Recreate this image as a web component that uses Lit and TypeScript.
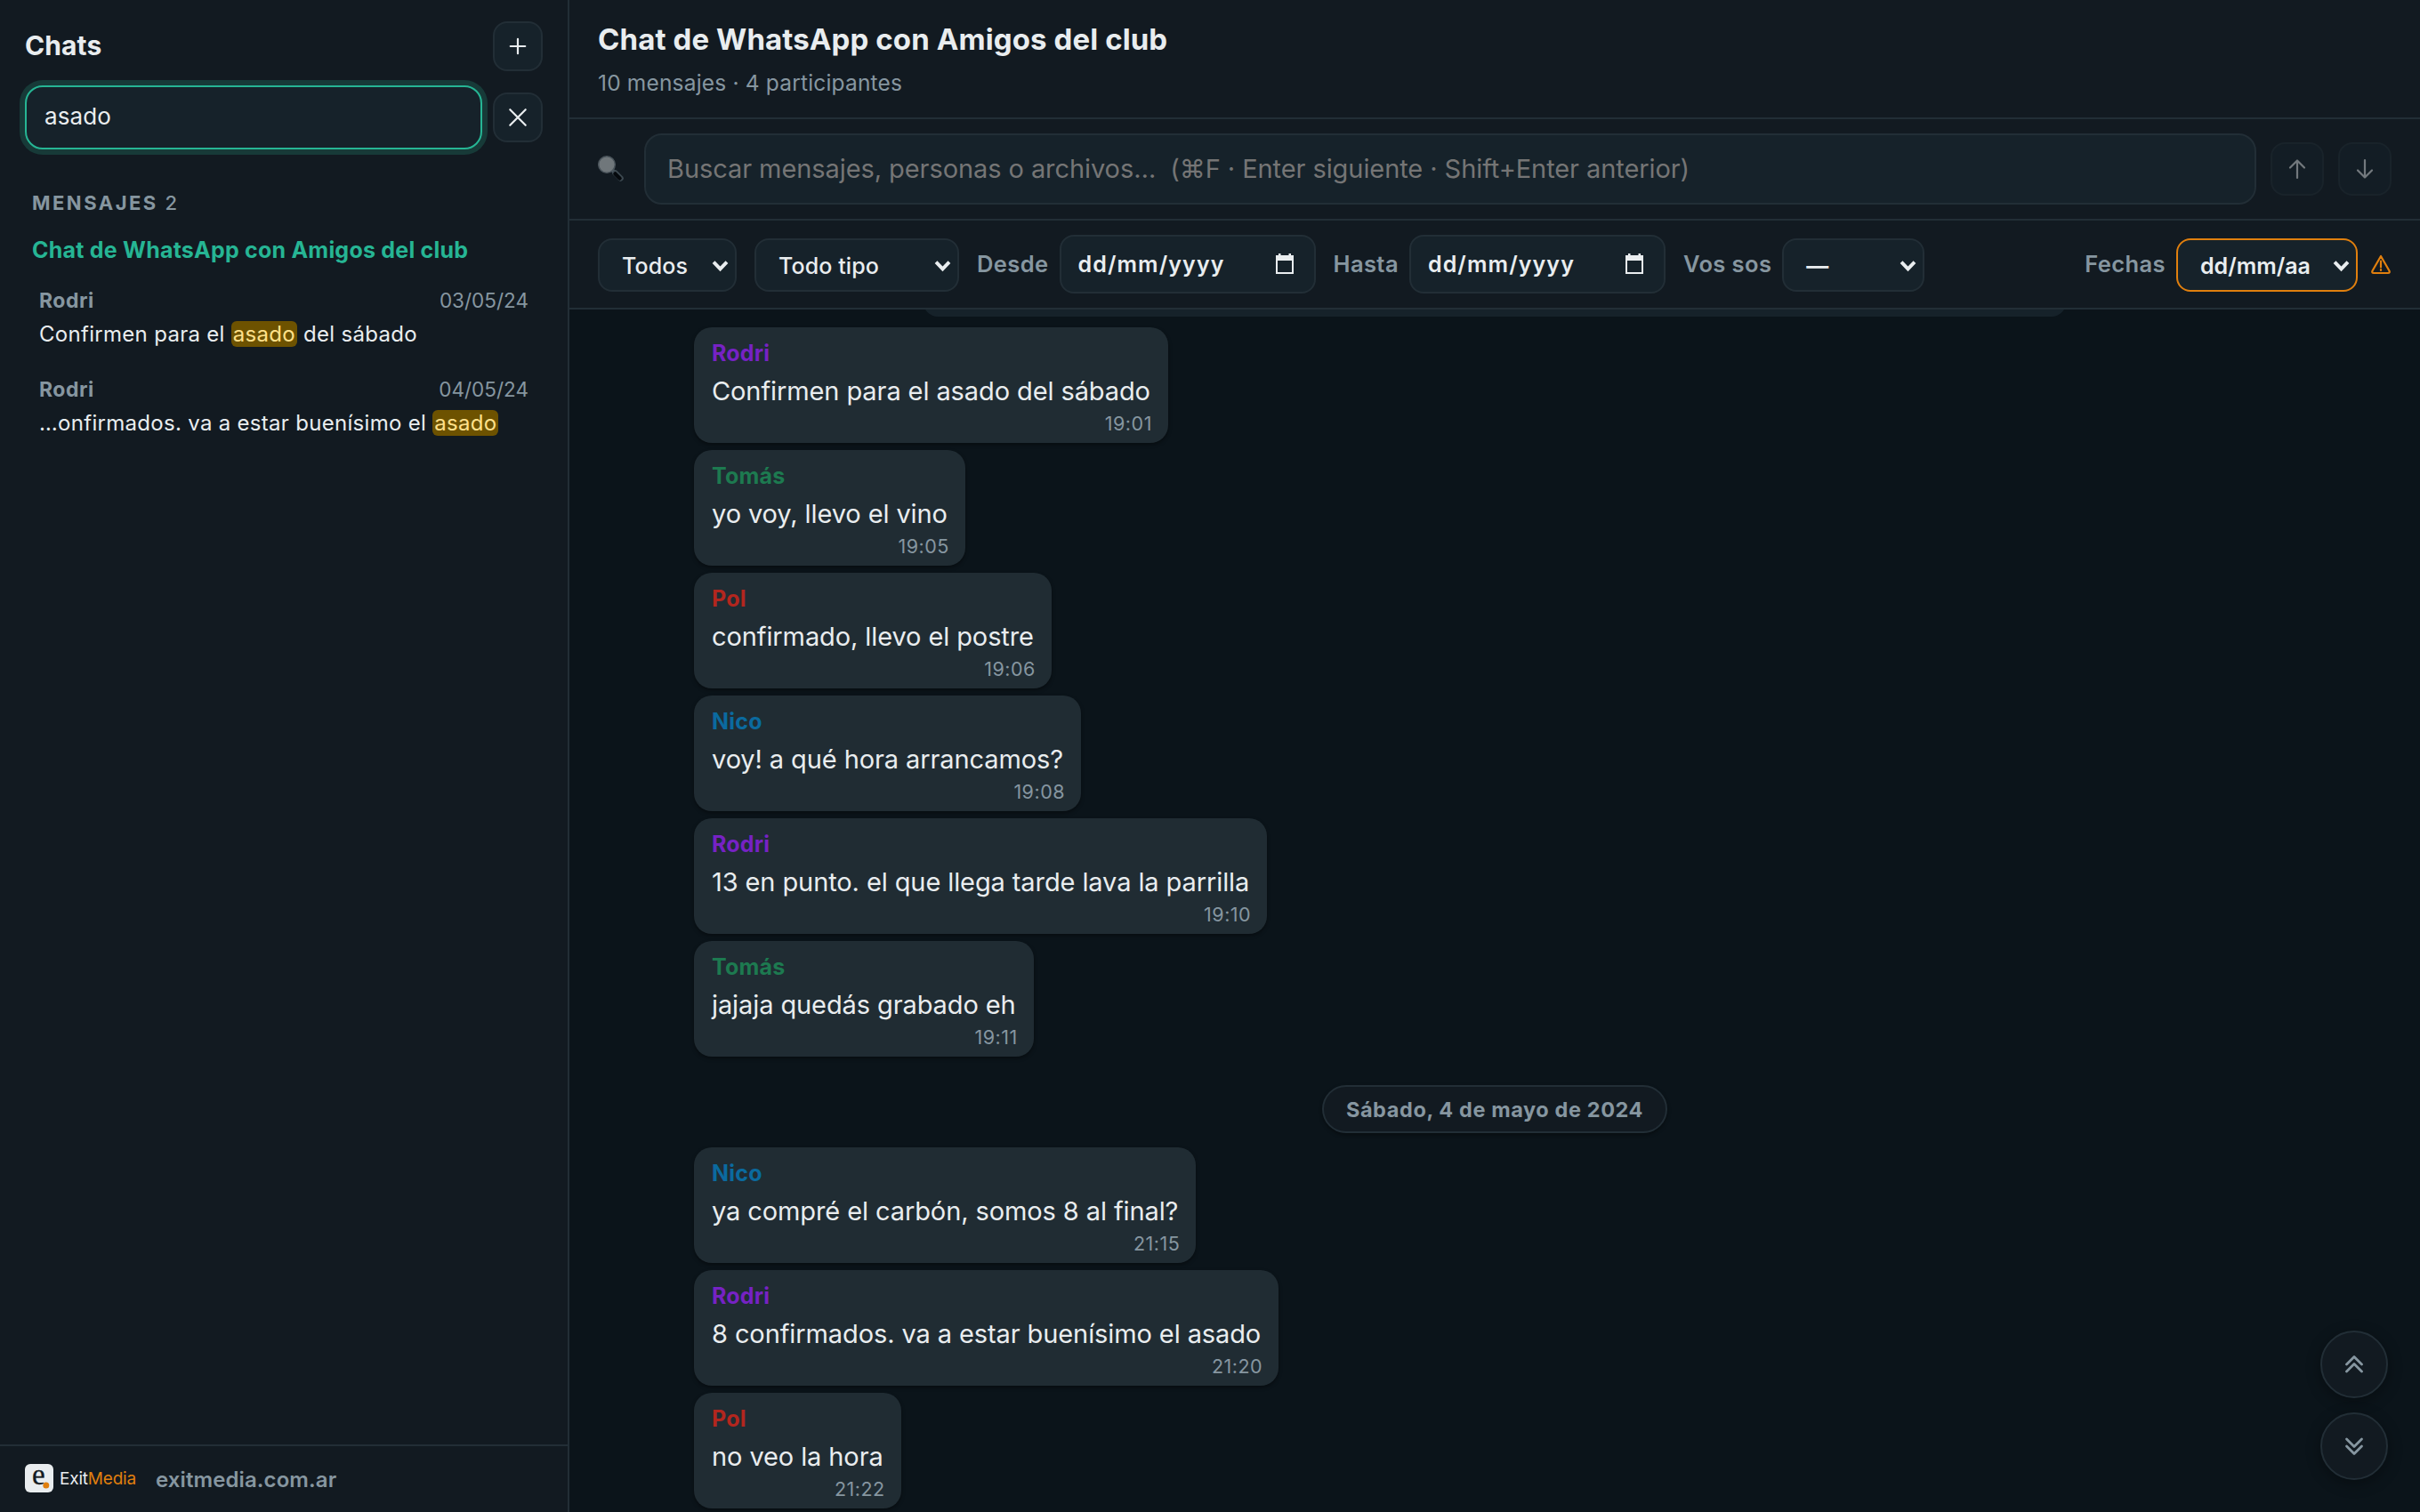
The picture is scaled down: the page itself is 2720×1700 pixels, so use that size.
import { html, css, svg, LitElement } from "lit";
import { customElement, property } from "lit/decorators.js";

interface Message {
  author: string;
  color: string;
  text: string;
  time: string;
}

interface Hit {
  author: string;
  date: string;
  before: string;
  after: string;
}

const HITS: Hit[] = [
  { author: "Rodri", date: "03/05/24", before: "Confirmen para el ", after: " del sábado" },
  { author: "Rodri", date: "04/05/24", before: "…onfirmados. va a estar buenísimo el ", after: "" },
];

const FRIDAY: Message[] = [
  { author: "Rodri", color: "purple", text: "Confirmen para el asado del sábado", time: "19:01" },
  { author: "Tomás", color: "green", text: "yo voy, llevo el vino", time: "19:05" },
  { author: "Pol", color: "red", text: "confirmado, llevo el postre", time: "19:06" },
  { author: "Nico", color: "blue", text: "voy! a qué hora arrancamos?", time: "19:08" },
  { author: "Rodri", color: "purple", text: "13 en punto. el que llega tarde lava la parrilla", time: "19:10" },
  { author: "Tomás", color: "green", text: "jajaja quedás grabado eh", time: "19:11" },
];

const SATURDAY: Message[] = [
  { author: "Nico", color: "blue", text: "ya compré el carbón, somos 8 al final?", time: "21:15" },
  { author: "Rodri", color: "purple", text: "8 confirmados. va a estar buenísimo el asado", time: "21:20" },
  { author: "Pol", color: "red", text: "no veo la hora", time: "21:22" },
];

const ICONS = {
  plus: svg`<path d="M12 3v18M3 12h18" />`,
  close: svg`<path d="M2.5 2.5l19 19M21.5 2.5l-19 19" />`,
  up: svg`<path d="M12 22V2.5M4 10.5l8-8 8 8" />`,
  down: svg`<path d="M12 2v19.5M4 13.5l8 8 8-8" />`,
  top: svg`<path d="M3.5 12L12 3.5l8.5 8.5M3.5 20L12 11.5l8.5 8.5" />`,
  bottom: svg`<path d="M3.5 4l8.5 8.5L20.5 4M3.5 12l8.5 8.5 8.5-8.5" />`,
  chevron: svg`<path d="M3.5 7.5L12 16.5l8.5-9" />`,
  warning: svg`<path d="M12 3L2.5 19.5q-1 2.5 1.5 2.5h16q2.500 0 1.500-2.500zM12 8.500v7M12 18v1" />`,
};

@customElement("ui-icon")
export class UiIcon extends LitElement {
  static styles = css`
    :host {
      display: inline-flex;
      flex: none;
      width: 24px;
      height: 24px;
    }
    svg {
      width: 100%;
      height: 100%;
      fill: none;
      stroke: currentColor;
      stroke-width: var(--stroke, 2.2);
      stroke-linecap: var(--cap, round);
      stroke-linejoin: var(--join, round);
    }
  `;

  @property() name: keyof typeof ICONS = "plus";

  render() {
    return html`<svg viewBox="0 0 24 24">${ICONS[this.name]}</svg>`;
  }
}

@customElement("chat-sidebar")
export class ChatSidebar extends LitElement {
  static styles = css`
    :host {
      box-sizing: border-box;
      display: flex;
      flex-direction: column;
      width: 640px;
      flex: none;
      background: #121a21;
      border-right: 2px solid #222e36;
    }
    .top {
      display: grid;
      grid-template-columns: 1fr 56px;
      column-gap: 12px;
      row-gap: 16px;
      align-items: center;
      padding: 24px 28px 0;
    }
    .title {
      padding-bottom: 2px;
      font-size: 30px;
      font-weight: 700;
      letter-spacing: 0.1px;
      line-height: 54px;
    }
    .square {
      box-sizing: border-box;
      display: flex;
      align-items: center;
      justify-content: center;
      width: 56px;
      height: 56px;
      border: 2px solid #222e36;
      border-radius: 16px;
      background: #16222a;
    }
    .square ui-icon {
      width: 22px;
      height: 22px;
      --stroke: 2.4;
    }
    .search {
      box-sizing: border-box;
      height: 72px;
      padding: 0 20px;
      border: 2px solid #26b594;
      border-radius: 20px;
      background: #16222a;
      box-shadow: 0 0 0 6px #173a38;
      font-size: 26px;
      letter-spacing: 0.1px;
      line-height: 66px;
    }
    .results {
      flex: 1;
      padding: 44px 36px 0;
    }
    .section {
      font-size: 22px;
      font-weight: 700;
      letter-spacing: 2.5px;
      line-height: 32px;
      color: #8696a0;
    }
    .section span {
      font-weight: 500;
    }
    .chat {
      margin-top: 20px;
      font-size: 25px;
      font-weight: 650;
      letter-spacing: 0.22px;
      line-height: 34px;
      color: #26b594;
    }
    .hit {
      height: 100px;
      padding: 0 8px;
    }
    .chat + .hit {
      margin-top: 23px;
    }
    .meta {
      display: flex;
      justify-content: space-between;
      font-size: 22.5px;
      line-height: 34px;
      color: #8696a0;
    }
    .meta b {
      font-size: 23px;
      font-weight: 650;
      letter-spacing: 0.5px;
    }
    .snippet {
      margin-top: 3px;
      font-size: 24px;
      letter-spacing: 0.3px;
      line-height: 36px;
      white-space: pre;
    }
    mark {
      padding: 0 2px;
      border-radius: 6px;
      background: #6d5200;
      color: #ffe08a;
    }
    .footer {
      display: flex;
      align-items: center;
      height: 76px;
      box-sizing: border-box;
      padding: 0 28px;
      border-top: 2px solid #222e36;
    }
    .logo {
      width: 32px;
      height: 32px;
      margin-top: -2px;
      overflow: visible;
    }
    .brand {
      margin-left: 7px;
      padding-bottom: 2px;
      font-size: 19px;
      letter-spacing: -0.2px;
    }
    .brand span {
      color: #e07f0e;
    }
    .site {
      margin-left: 22px;
      font-size: 24px;
      font-weight: 600;
      letter-spacing: 0.1px;
      color: #8696a0;
    }
    .letter {
      font-family: "Liberation Serif", serif;
      font-size: 33px;
      stroke: #121a21;
      stroke-width: 0.3px;
    }
  `;

  render() {
    return html`
      <div class="top">
        <div class="title">Chats</div>
        <div class="square"><ui-icon name="plus"></ui-icon></div>
        <div class="search">asado</div>
        <div class="square"><ui-icon name="close"></ui-icon></div>
      </div>
      <div class="results">
        <div class="section">MENSAJES <span>2</span></div>
        <div class="chat">Chat de WhatsApp con Amigos del club</div>
        ${HITS.map(
          (hit) => html`
            <div class="hit">
              <div class="meta"><b>${hit.author}</b><span class="date">${hit.date}</span></div>
              <div class="snippet">${hit.before}<mark>asado</mark>${hit.after}</div>
            </div>
          `
        )}
      </div>
      <div class="footer">
        <svg class="logo" viewBox="0 0 32 32">
          <rect width="32" height="32" rx="6" fill="#e9edef" />
          <text class="letter" x="8" y="23" fill="#121a21">e</text>
          <circle cx="23.8" cy="24" r="3.5" fill="#e07f0e" />
        </svg>
        <div class="brand">Exit<span>Media</span></div>
        <div class="site">exitmedia.com.ar</div>
      </div>
    `;
  }
}

@customElement("chat-toolbar")
export class ChatToolbar extends LitElement {
  static styles = css`
    :host {
      display: block;
      background: #121a21;
    }
    .heading,
    .finder,
    .filters {
      box-sizing: border-box;
      border-bottom: 2px solid #222e36;
      padding: 0 32px;
    }
    .heading {
      height: 134px;
      padding-top: 22px;
    }
    .title {
      font-size: 33px;
      font-weight: 700;
      letter-spacing: 0.1px;
      line-height: 44px;
    }
    .subtitle {
      margin-top: 10px;
      font-size: 24.5px;
      letter-spacing: 0.18px;
      line-height: 34px;
      color: #8696a0;
    }
    .finder {
      display: flex;
      align-items: center;
      gap: 16px;
      height: 114px;
    }
    .lens {
      width: 30px;
      height: 30px;
      margin: -2px 6px 0 0;
    }
    .input {
      box-sizing: border-box;
      flex: 1;
      height: 80px;
      padding: 0 24px;
      border: 2px solid #222e36;
      border-radius: 20px;
      background: #16222a;
      font-size: 29px;
      letter-spacing: -0.08px;
      line-height: 76px;
      color: #757575;
      white-space: pre;
    }
    .step {
      box-sizing: border-box;
      display: flex;
      align-items: center;
      justify-content: center;
      width: 60px;
      height: 60px;
      border: 2px solid #222e36;
      border-radius: 16px;
      background: #16222a;
      opacity: 0.45;
    }
    .filters {
      display: flex;
      align-items: center;
      height: 100px;
      font-size: 25px;
      font-weight: 500;
    }
    .select,
    .date {
      box-sizing: border-box;
      display: flex;
      align-items: center;
      justify-content: space-between;
      height: 60px;
      padding: 1px 6px 0 25px;
      border: 2px solid #222e36;
      border-radius: 16px;
      background: #16222a;
    }
    .select {
      margin-top: 2px;
    }
    .select ui-icon {
      width: 21px;
      height: 21px;
      --stroke: 4.4;
      --cap: butt;
      --join: miter;
    }
    .date {
      width: 288px;
      height: 66px;
      margin: 0 20px 0 12px;
      padding: 0 22px 0 19px;
      font-weight: 600;
      letter-spacing: 1.1px;
    }
    .date svg {
      width: 22px;
      height: 24px;
    }
    .label {
      padding-bottom: 1px;
      font-size: 25.5px;
      font-weight: 600;
      letter-spacing: 0.4px;
      color: #8696a0;
    }
    .who {
      width: 156px;
      margin-right: 20px;
      font-weight: 450;
      letter-spacing: 0.1px;
    }
    .type {
      width: 230px;
      margin-right: 20px;
      font-weight: 450;
      letter-spacing: 0.1px;
    }
    .me {
      width: 160px;
      margin-left: 12px;
      font-weight: 600;
    }
    .format {
      width: 204px;
      margin: 2px 14px 0 12px;
      border-color: #e07f0e;
      font-weight: 600;
    }
    .spacer {
      flex: 1;
    }
    .warning {
      color: #e07f0e;
    }
  `;

  dateField() {
    return html`
      <div class="date">
        <span>dd/mm/yyyy</span>
        <svg viewBox="0 0 22 24">
          <path d="M2 3h18v19H2z" fill="none" stroke="#e9edef" stroke-width="2" />
          <path d="M1 2h20v6H1zM4 0h2.5v3H4zM15.5 0H18v3h-2.5z" fill="#e9edef" />
        </svg>
      </div>
    `;
  }

  render() {
    return html`
      <div class="heading">
        <div class="title">Chat de WhatsApp con Amigos del club</div>
        <div class="subtitle">10 mensajes · 4 participantes</div>
      </div>
      <div class="finder">
        <svg class="lens" viewBox="0 0 30 30">
          <g fill="none" stroke-linecap="round">
            <path d="M16 17l4 4" stroke="#566169" stroke-width="4" />
            <path d="M19.5 20.5l6 6" stroke="#3d4951" stroke-width="6.5" />
            <path d="M19.5 21.5l5 5" stroke="#05090d" stroke-width="4.5" />
          </g>
          <circle cx="10" cy="11" r="9.3" fill="#70777b" stroke="#4a545b" stroke-width="1.5" />
        </svg>
        <div class="input">Buscar mensajes, personas o archivos…  (⌘F · Enter siguiente · Shift+Enter anterior)</div>
        <div class="step"><ui-icon name="up"></ui-icon></div>
        <div class="step"><ui-icon name="down"></ui-icon></div>
      </div>
      <div class="filters">
        <div class="select who">Todos<ui-icon name="chevron"></ui-icon></div>
        <div class="select type">Todo tipo<ui-icon name="chevron"></ui-icon></div>
        <span class="label">Desde</span>
        ${this.dateField()}
        <span class="label">Hasta</span>
        ${this.dateField()}
        <span class="label">Vos sos</span>
        <div class="select me">—<ui-icon name="chevron"></ui-icon></div>
        <div class="spacer"></div>
        <span class="label">Fechas</span>
        <div class="select format">dd/mm/aa<ui-icon name="chevron"></ui-icon></div>
        <ui-icon class="warning" name="warning"></ui-icon>
      </div>
    `;
  }
}

@customElement("chat-bubble")
export class ChatBubble extends LitElement {
  static styles = css`
    :host {
      display: block;
      box-sizing: border-box;
      width: fit-content;
      height: 130px;
      padding: 12px 20px 0;
      border-radius: 20px;
      background: #202c33;
      box-shadow: 0 2px 4px rgba(0, 0, 0, 0.4);
    }
    .author {
      font-size: 25px;
      font-weight: 700;
      letter-spacing: 0.2px;
      line-height: 34px;
    }
    .purple { color: #7622c4; }
    .green { color: #1d7a50; }
    .red { color: #b3261e; }
    .blue { color: #0b6a9f; }
    .text {
      margin-top: 5px;
      font-size: 29px;
      letter-spacing: -0.1px;
      line-height: 42px;
      white-space: nowrap;
    }
    .time {
      margin: 0 -2px 0 0;
      font-size: 21.5px;
      letter-spacing: 0.5px;
      line-height: 30px;
      text-align: right;
      color: #8696a0;
    }
  `;

  @property({ attribute: false }) message!: Message;

  render() {
    const { author, color, text, time } = this.message;
    return html`
      <div class="author ${color}">${author}</div>
      <div class="text">${text}</div>
      <div class="time">${time}</div>
    `;
  }
}

@customElement("app-root")
export class AppRoot extends LitElement {
  static styles = css`
    :host {
      display: flex;
      width: 2720px;
      height: 1700px;
      overflow: hidden;
      background: #0b141a;
      color: #e9edef;
      font-family: Inter, "Liberation Sans", sans-serif;
    }
    .main {
      position: relative;
      display: flex;
      flex-direction: column;
      flex: 1;
      min-width: 0;
    }
    .messages {
      display: flex;
      flex-direction: column;
      gap: 8px;
      padding-left: 140px;
    }
    /* only the lower edge of the notice is scrolled into view */
    .notice {
      align-self: center;
      width: 1284px;
      height: 8px;
      margin: 0 140px 4px 0;
      overflow: hidden;
      display: flex;
      align-items: flex-end;
    }
    .notice div {
      width: 100%;
      height: 60px;
      flex: none;
      border-radius: 16px;
      background: #16222a;
    }
    .day {
      box-sizing: border-box;
      align-self: center;
      width: 388px;
      height: 54px;
      margin: 24px 140px 8px 0;
      border: 2px solid #222e36;
      border-radius: 27px;
      background: #121a21;
      box-shadow: 0 2px 4px rgba(0, 0, 0, 0.4);
      font-size: 23.5px;
      font-weight: 650;
      letter-spacing: 0.6px;
      line-height: 51px;
      text-align: center;
      color: #8696a0;
    }
    .jump {
      position: absolute;
      right: 36px;
      bottom: 36px;
      display: flex;
      flex-direction: column;
      gap: 16px;
    }
    .jump div {
      box-sizing: border-box;
      display: flex;
      align-items: center;
      justify-content: center;
      width: 76px;
      height: 76px;
      border: 2px solid #222e36;
      border-radius: 50%;
      background: #121a21;
      box-shadow: 0 4px 16px rgba(0, 0, 0, 0.35);
      color: #8696a0;
      --stroke: 2.8;
    }
  `;

  render() {
    return html`
      <chat-sidebar></chat-sidebar>
      <div class="main">
        <chat-toolbar></chat-toolbar>
        <div class="messages">
          <div class="notice"><div></div></div>
          ${FRIDAY.map((m) => html`<chat-bubble .message=${m}></chat-bubble>`)}
          <div class="day">Sábado, 4 de mayo de 2024</div>
          ${SATURDAY.map((m) => html`<chat-bubble .message=${m}></chat-bubble>`)}
        </div>
        <div class="jump">
          <div><ui-icon name="top"></ui-icon></div>
          <div><ui-icon name="bottom"></ui-icon></div>
        </div>
      </div>
    `;
  }
}
